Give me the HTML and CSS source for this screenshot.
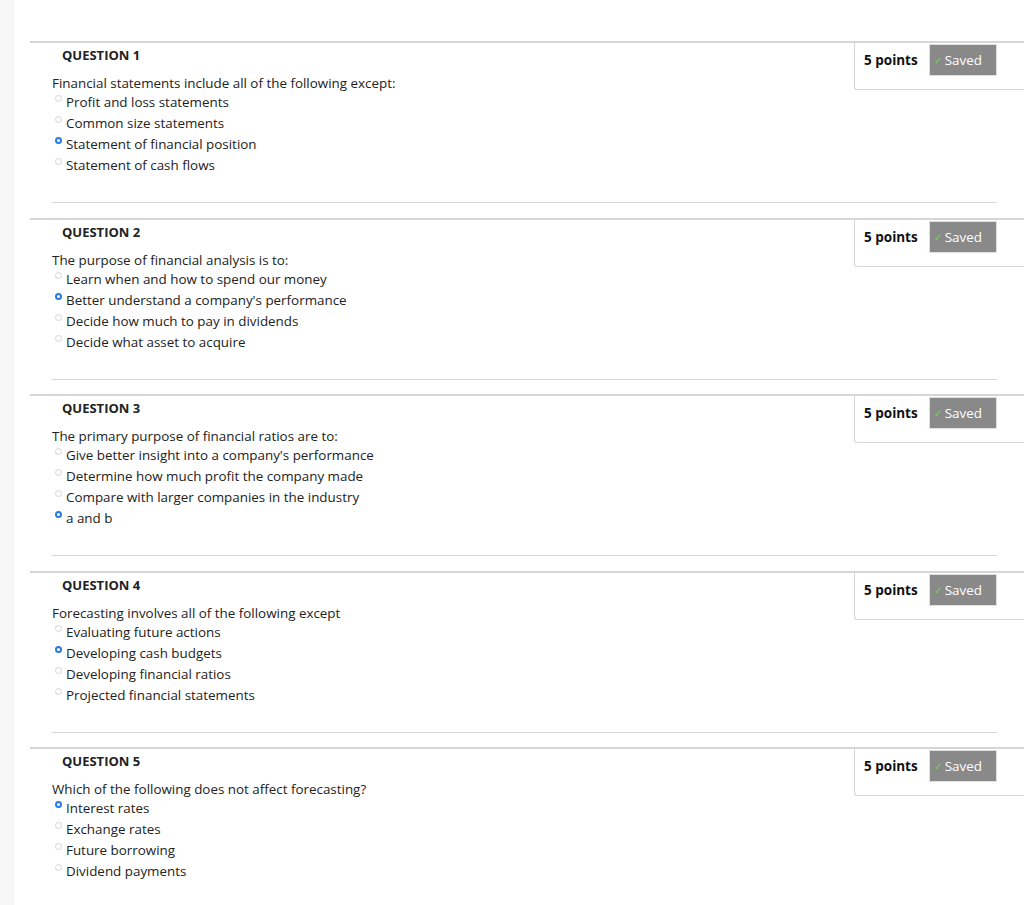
FILE: index.html
```html
<!DOCTYPE html>
<html>
<head>
<meta charset="utf-8">
<link rel="stylesheet" href="styles.css">
</head>
<body>
<div class="strip"></div>
<main class="page">
  <section class="question">
    <div class="q-row">
      <div class="q-body">
        <h3 class="q-title">QUESTION 1</h3>
        <p class="q-text">Financial statements include all of the following except:</p>
        <ul class="options">
          <li class="option"><span class="radio"></span>Profit and loss statements</li>
          <li class="option"><span class="radio"></span>Common size statements</li>
          <li class="option"><span class="radio selected"></span>Statement of financial position</li>
          <li class="option"><span class="radio"></span>Statement of cash flows</li>
        </ul>
      </div>
      <div class="points"><span class="pts">5 points</span><span class="saved"><span class="check">&#10003;</span>Saved</span></div>
    </div>
    <hr class="sep">
  </section>

  <section class="question">
    <div class="q-row">
      <div class="q-body">
        <h3 class="q-title">QUESTION 2</h3>
        <p class="q-text">The purpose of financial analysis is to:</p>
        <ul class="options">
          <li class="option"><span class="radio"></span>Learn when and how to spend our money</li>
          <li class="option"><span class="radio selected"></span>Better understand a company's performance</li>
          <li class="option"><span class="radio"></span>Decide how much to pay in dividends</li>
          <li class="option"><span class="radio"></span>Decide what asset to acquire</li>
        </ul>
      </div>
      <div class="points"><span class="pts">5 points</span><span class="saved"><span class="check">&#10003;</span>Saved</span></div>
    </div>
    <hr class="sep">
  </section>

  <section class="question">
    <div class="q-row">
      <div class="q-body">
        <h3 class="q-title">QUESTION 3</h3>
        <p class="q-text">The primary purpose of financial ratios are to:</p>
        <ul class="options">
          <li class="option"><span class="radio"></span>Give better insight into a company's performance</li>
          <li class="option"><span class="radio"></span>Determine how much profit the company made</li>
          <li class="option"><span class="radio"></span>Compare with larger companies in the industry</li>
          <li class="option"><span class="radio selected"></span>a and b</li>
        </ul>
      </div>
      <div class="points"><span class="pts">5 points</span><span class="saved"><span class="check">&#10003;</span>Saved</span></div>
    </div>
    <hr class="sep">
  </section>

  <section class="question">
    <div class="q-row">
      <div class="q-body">
        <h3 class="q-title">QUESTION 4</h3>
        <p class="q-text">Forecasting involves all of the following except</p>
        <ul class="options">
          <li class="option"><span class="radio"></span>Evaluating future actions</li>
          <li class="option"><span class="radio selected"></span>Developing cash budgets</li>
          <li class="option"><span class="radio"></span>Developing financial ratios</li>
          <li class="option"><span class="radio"></span>Projected financial statements</li>
        </ul>
      </div>
      <div class="points"><span class="pts">5 points</span><span class="saved"><span class="check">&#10003;</span>Saved</span></div>
    </div>
    <hr class="sep">
  </section>

  <section class="question">
    <div class="q-row">
      <div class="q-body">
        <h3 class="q-title">QUESTION 5</h3>
        <p class="q-text">Which of the following does not affect forecasting?</p>
        <ul class="options">
          <li class="option"><span class="radio selected"></span>Interest rates</li>
          <li class="option"><span class="radio"></span>Exchange rates</li>
          <li class="option"><span class="radio"></span>Future borrowing</li>
          <li class="option"><span class="radio"></span>Dividend payments</li>
        </ul>
      </div>
      <div class="points"><span class="pts">5 points</span><span class="saved"><span class="check">&#10003;</span>Saved</span></div>
    </div>
  </section>
</main>
</body>
</html>
```

FILE: styles.css
```css
html, body {
  margin: 0;
  padding: 0;
}
body {
  background: #ffffff;
  font-family: "Open Sans", "Liberation Sans", sans-serif;
  color: #222;
  min-height: 905px;
  display: flex;
}
.strip {
  width: 15px;
  flex: none;
  background: #f6f6f6;
  min-height: 905px;
}
.page {
  flex: 1;
  padding-top: 41px;
  margin-left: 15px;
}
.question {
  border-top: 2px solid #d6d6d6;
}
.q-row {
  display: flex;
  align-items: flex-start;
}
.q-body {
  flex: 1;
}
.q-title {
  margin: 3px 0 0 32px;
  font-size: 13px;
  line-height: 18px;
  font-weight: 700;
  color: #222;
}
.q-text {
  margin: 10px 0 0 22px;
  font-size: 13.4px;
  line-height: 18px;
}
.options {
  list-style: none;
  margin: 0;
  padding: 0 0 0 22px;
}
.option {
  display: flex;
  align-items: flex-start;
  font-size: 13.4px;
  line-height: 21px;
}
.radio {
  box-sizing: border-box;
  width: 7px;
  height: 7px;
  border-radius: 50%;
  border: 1px solid #d4d4d4;
  margin: 3px 4px 0 3px;
  flex: none;
}
.radio.selected {
  border: 2px solid #2a7be0;
  background: #fff;
}
.points {
  width: 170px;
  box-sizing: border-box;
  border-left: 1px solid #d6d6d6;
  border-bottom: 1px solid #d6d6d6;
  border-bottom-left-radius: 3px;
  padding: 1px 0 13px 9px;
  display: flex;
  align-items: center;
  gap: 11px;
}
.pts {
  font-size: 13.5px;
  font-weight: 700;
  color: #111;
}
.saved {
  box-sizing: border-box;
  width: 68px;
  height: 32px;
  background: #898989;
  border: 1px solid #e0e0e0;
  color: #fff;
  font-size: 13.4px;
  display: flex;
  align-items: center;
  padding-left: 4px;
}
.check {
  color: #6fdc4a;
  font-size: 10px;
  margin-right: 3px;
}
.sep {
  border: none;
  border-top: 1px solid #d6d6d6;
  margin: 26px 27px 14.5px 22px;
  height: 0;
}
```
